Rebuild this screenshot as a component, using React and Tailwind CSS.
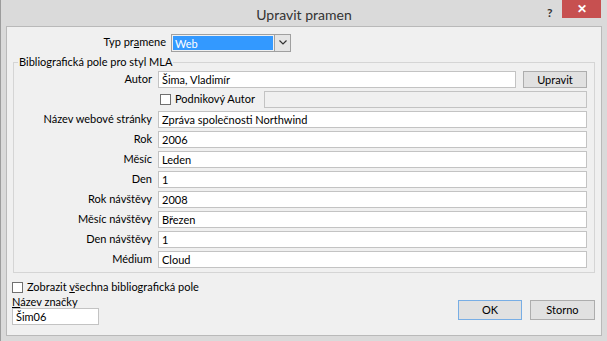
import React from 'react';

const rows = [
  ['Název webové stránky', 'Zpráva společnosti Northwind'],
  ['Rok', '2006'],
  ['Měsíc', 'Leden'],
  ['Den', '1'],
  ['Rok návštěvy', '2008'],
  ['Měsíc návštěvy', 'Březen'],
  ['Den návštěvy', '1'],
  ['Médium', 'Cloud'],
];

const Field = ({ value, className = '' }) => (
  <div className={`h-[17px] bg-white border border-[#c3c3c3] pl-[3px] leading-[15px] ${className}`}>{value}</div>
);

const Check = () => <div className="w-[11px] h-[11px] bg-white border border-[#707070] shrink-0" />;

export default function App() {
  return (
    <div
      className="w-[607px] h-[341px] bg-[#dadada] border-l border-[#9c9c9c] flex flex-col text-[11px] text-black"
      style={{ fontFamily: 'Lato, "Noto Sans", sans-serif' }}
    >
      {/* title bar */}
      <div className="h-[26px] relative flex items-center justify-center shrink-0">
        <span className="text-[14px] text-[#333] pt-[2px]">Upravit pramen</span>
        <span className="absolute left-[546px] top-[4px] text-[12px] font-bold text-[#333]">?</span>
        <div className="absolute left-[561px] top-0 w-[39px] h-[18px] bg-[#c75050] flex items-center justify-center text-white text-[12px] font-bold leading-none">
          ✕
        </div>
      </div>

      {/* content */}
      <div className="flex-1 mx-[5px] mb-[5px] bg-[#f0f0f0] border border-[#b9b9b9] relative flex flex-col">
        {/* type row */}
        <div className="flex items-center mt-[7px] h-[17px]">
          <div className="w-[159px] text-right">
            Typ pr<span className="underline">a</span>mene
          </div>
          <div className="ml-[5px] w-[120px] h-[18px] flex border border-[#a0a0a0]">
            <div className="flex-1 bg-[#3399ff] text-white pl-[2px] leading-[16px] border border-[#f0f0f0]">Web</div>
            <div className="w-[16px] bg-[#e5e5e5] border-l border-[#a0a0a0] flex items-center justify-center">
              <svg width="8" height="5" viewBox="0 0 8 5"><path d="M0.5 0.5 L4 4 L7.5 0.5" fill="none" stroke="#333" strokeWidth="1.2" /></svg>
            </div>
          </div>
        </div>

        {/* group box */}
        <div className="mx-[6px] mt-[11px] relative border border-[#d5d5d5] pt-[8px] pb-[4px] pr-[7px]">
          <span className="absolute left-[4px] -top-[8px] bg-[#f0f0f0] px-[1px] leading-[14px]">
            Bibliografická pole pro styl MLA
          </span>
          <div className="flex flex-col gap-[3px]">
            <div className="flex items-center h-[17px]">
              <div className="w-[138px] text-right">Autor</div>
              <Field value="Šima, Vladimír" className="ml-[6px] w-[358px]" />
              <div className="ml-[7px] flex-1 h-[17px] bg-[#e1e1e1] border border-[#adadad] flex items-center justify-center leading-none">
                Upravit
              </div>
            </div>
            <div className="flex items-center h-[17px]">
              <div className="w-[146px]" />
              <Check />
              <span className="ml-[4px]">Podnikový Autor</span>
              <div className="ml-[9px] flex-1 h-[17px] bg-[#f0f0f0] border border-[#c3c3c3]" />
            </div>
            {rows.map(([label, value]) => (
              <div key={label} className="flex items-center h-[17px]">
                <div className="w-[138px] text-right">{label}</div>
                <Field value={value} className="ml-[6px] flex-1" />
              </div>
            ))}
          </div>
        </div>

        {/* bottom */}
        <div className="flex justify-between mx-[5px] mt-[8px]">
          <div className="flex flex-col">
            <div className="flex items-center h-[12px]">
              <Check />
              <span className="ml-[4px]">
                Zobrazit <span className="underline">v</span>šechna bibliografická pole
              </span>
            </div>
            <div className="mt-[2px] leading-[13px]">
              <span className="underline">N</span>ázev značky
            </div>
            <Field value="Šim06" className="mt-[0px] w-[87px]" />
          </div>
          <div className="flex gap-[8px] mt-[19px] mr-[1px]">
            <div className="w-[64px] h-[20px] bg-[#e1e1e1] border border-[#78aee5] flex items-center justify-center">OK</div>
            <div className="w-[65px] h-[20px] bg-[#e1e1e1] border border-[#adadad] flex items-center justify-center">Storno</div>
          </div>
        </div>
      </div>
    </div>
  );
}
